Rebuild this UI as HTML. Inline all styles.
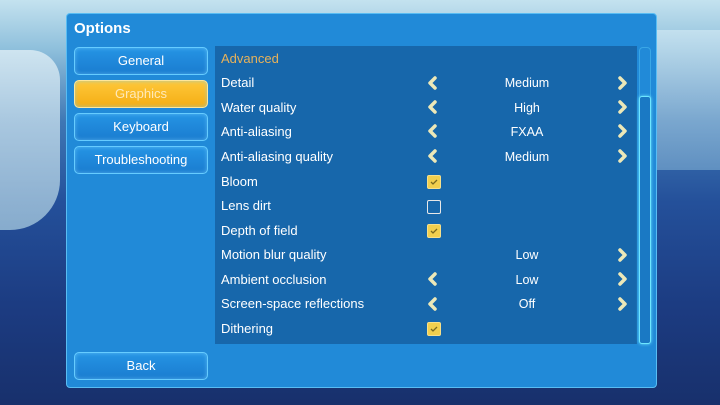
<!DOCTYPE html>
<html><head><style>
*{margin:0;padding:0;box-sizing:border-box}
body{width:720px;height:405px;overflow:hidden;position:relative;font-family:"Liberation Sans","DejaVu Sans",sans-serif;
background:linear-gradient(180deg,#c4e2ef 0%,#8fc0dc 12%,#3f77b4 30%,#24509a 50%,#1c3c82 75%,#18306c 100%);}
.snowl{position:absolute;left:0;top:50px;width:60px;height:180px;background:linear-gradient(180deg,#e4f1f7,#a8cce0);border-radius:0 30px 50px 0;opacity:.75}
.snowr{position:absolute;right:0;top:30px;width:64px;height:140px;background:linear-gradient(180deg,#d4eaf4,#7aaad0);opacity:.65}
.panel{position:absolute;left:66px;top:13px;width:591px;height:375px;background:#218ad8;border:1px solid #59bdf3;border-radius:4px}
.title{position:absolute;left:74px;top:20px;color:#fff;font-weight:bold;font-size:15px}
.btn{position:absolute;left:74px;width:134px;height:28px;border:1.5px solid #66ccff;border-radius:5px;background:linear-gradient(#2594e4,#1a7cd0);color:#fff;font-size:13px;text-align:center;line-height:25px;box-shadow:inset 0 0 4px rgba(120,210,255,.6)}
.btn.sel{background:linear-gradient(#ffc83a,#f4ae14);border-color:#ffe79a;color:#ffe9b8}
.content{position:absolute;left:215px;top:46px;width:422px;height:298px;background:#1767ab}
.track{position:absolute;left:639px;top:47px;width:12px;height:297px;border:1px solid #3aa7e6;border-radius:4px}
.thumb{position:absolute;left:639px;top:96px;width:12px;height:248px;border:1.5px solid #6ee6ff;border-radius:3px;background:#1a79c4;box-shadow:0 0 3px #6ee6ff}
.row{position:absolute;left:221px;color:#fff;font-size:13px;height:18px;line-height:18px}
.adv{color:#e8b25a}
.val{position:absolute;left:477px;width:100px;text-align:center;color:#fff;font-size:12.5px;line-height:18px;height:18px}
.cb{position:absolute;left:427px;width:14px;height:14px;border-radius:2px}
.cb.on{background:#f1cf4e;border:1px solid #f7e08a}
.cb.off{border:1.5px solid #e8e8e8}
</style></head><body>
<div class="snowl"></div><div class="snowr"></div>
<div class="panel"></div>
<div class="title">Options</div>
<div class="btn" style="top:47px">General</div>
<div class="btn sel" style="top:80px">Graphics</div>
<div class="btn" style="top:113px">Keyboard</div>
<div class="btn" style="top:146px">Troubleshooting</div>
<div class="btn" style="top:352px">Back</div>
<div class="content"></div>
<div class="track"></div><div class="thumb"></div>
<div class="row adv" style="top:50px">Advanced</div>
<div class="row" style="top:74px">Detail</div>
<div class="row" style="top:99px">Water quality</div>
<div class="row" style="top:123px">Anti-aliasing</div>
<div class="row" style="top:148px">Anti-aliasing quality</div>
<div class="row" style="top:173px">Bloom</div>
<div class="row" style="top:197px">Lens dirt</div>
<div class="row" style="top:222px">Depth of field</div>
<div class="row" style="top:246px">Motion blur quality</div>
<div class="row" style="top:271px">Ambient occlusion</div>
<div class="row" style="top:295px">Screen-space reflections</div>
<div class="row" style="top:320px">Dithering</div>
<div class="val" style="top:74px">Medium</div>
<div class="val" style="top:99px">High</div>
<div class="val" style="top:123px">FXAA</div>
<div class="val" style="top:148px">Medium</div>
<div class="val" style="top:246px">Low</div>
<div class="val" style="top:271px">Low</div>
<div class="val" style="top:295px">Off</div>
<div class="cb on" style="top:175px"></div>
<div class="cb off" style="top:200px"></div>
<div class="cb on" style="top:224px"></div>
<div class="cb on" style="top:322px"></div>
<svg width="720" height="405" style="position:absolute;left:0;top:0">
<g fill="none" stroke="#ece8b8" stroke-width="3.5" stroke-linecap="round" stroke-linejoin="round">
<path d="M435 78l-5 5 5 5M620 78l5 5-5 5"/>
<path d="M435 102l-5 5 5 5M620 102l5 5-5 5"/>
<path d="M435 126l-5 5 5 5M620 126l5 5-5 5"/>
<path d="M435 151l-5 5 5 5M620 151l5 5-5 5"/>
<path d="M620 250l5 5-5 5"/>
<path d="M435 274l-5 5 5 5M620 274l5 5-5 5"/>
<path d="M435 299l-5 5 5 5M620 299l5 5-5 5"/>
</g>
<g fill="none" stroke="#7a6a20" stroke-width="1.3"><path d="M431 182l2 2 4-4M431 231l2 2 4-4M431 329l2 2 4-4"/></g>
</svg>
</body></html>
